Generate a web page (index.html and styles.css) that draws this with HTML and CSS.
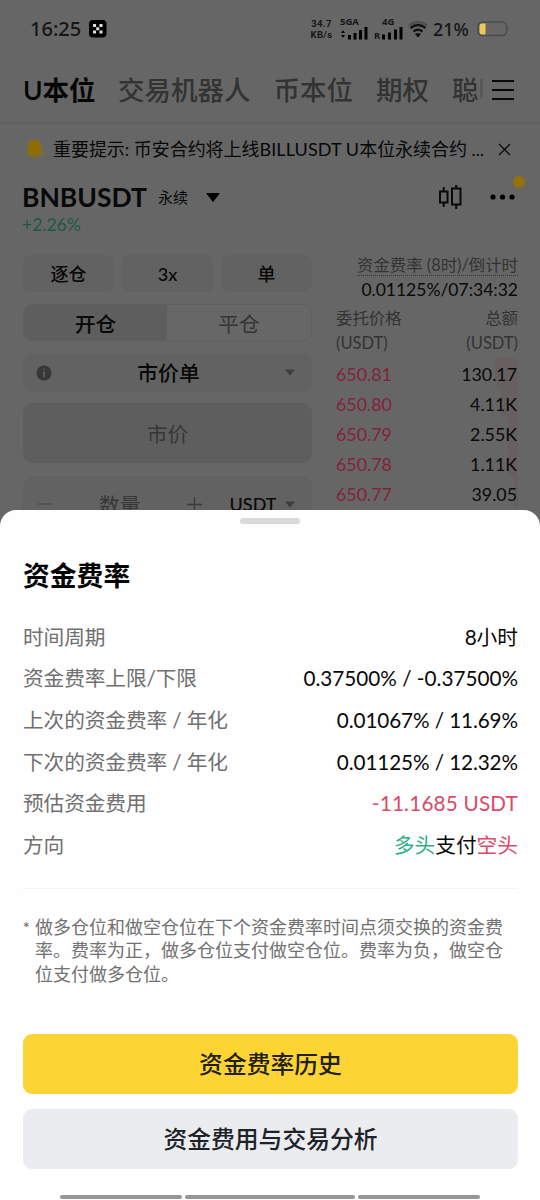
FILE: index.html
```html
<!DOCTYPE html>
<html lang="zh-CN">
<head>
<meta charset="utf-8">
<title>资金费率</title>
<link rel="stylesheet" href="styles.css">
</head>
<body>
<div class="screen">
  <header class="status">
    <span class="clock">16:25</span>
    <svg class="app-badge" width="18" height="18" viewBox="0 0 18 18"><rect width="17.5" height="17.5" rx="4"/><path fill="#ddd" d="M4 4h3v3H4zM10.500 4h3v3h-3zM7.200 7.200h3v3h-3zM4 10.500h3v3H4zM10.500 10.500h3v3h-3z"/></svg>
    <span class="speed"><b>34.7</b><b>KB/s</b></span>
    <span class="signal"><b>5GA</b><svg width="29" height="13" viewBox="0 0 29 13"><path d="M1 6l2-2.800L5 6zM1 8l2 2.800L5 8z"/><path d="M8 8h3v4.500H8zM13.500 6h3v6.500h-3zM19 3h3v9.500h-3zM24.500 0h3v12.500h-3z"/></svg></span>
    <span class="signal signal-r"><b>4G</b><span class="roam"><b>R</b><svg width="21" height="13" viewBox="0 0 21 13"><path d="M0 7.500h3v5H0zM6 5.500h3v7H6zM12 2.500h3v10h-3zM17.500 0h3v12.500h-3z"/></svg></span></span>
    <svg class="wifi" width="20" height="18" viewBox="0 0 20 18" fill="none" stroke-width="2.300"><path stroke="#505050" d="M1 5.500Q10-1.500 19 5.500"/><path stroke="#111" d="M2.500 8Q10 2 17.500 8M5.500 11.500Q10 8 14.500 11.500"/><path fill="#111" d="M7 14q3-2 6 0l-3 3.500z"/></svg>
    <span class="percent">21%</span>
    <svg class="battery" width="33" height="16" viewBox="0 0 33 16"><rect x="1" y="1" width="28.500" height="13.500" rx="4.500" fill="none" stroke="#4b4b4b" stroke-width="1.500"/><path fill="#4b4b4b" d="M30.500 5.500q2 2.200 0 4.500z"/><path fill="#efc65c" d="M5 2.500h3.500v11H5q-2.500 0-2.500-2.500V5q0-2.500 2.500-2.500z"/></svg>
  </header>

  <nav class="tabs">
    <span class="tab tab-on">U本位</span><span class="tab">交易机器人</span><span class="tab">币本位</span><span class="tab">期权</span><span class="tab tab-cut">聪明</span>
    <svg class="menu" width="24" height="22" viewBox="0 0 24 22"><path d="M1 2h22M1 11h22M1 20h22" stroke="#080808" stroke-width="2.200"/></svg>
  </nav>

  <div class="notice">
    <svg class="bell" width="19" height="20" viewBox="0 0 19 20" fill="#8f6d06"><path d="M9.500.5q6.300 0 6.500 6.500v4.500l2.500 3.500v1H.5v-1L3 11.500V7Q3.200.5 9.500.5z"/><path d="M7 17h5q-.5 2.500-2.500 2.500T7 17z"/></svg>
    <p class="notice-text">重要提示: 币安合约将上线<span class="latin">BILLUSDT U</span>本位永续合约 ...</p>
    <svg class="close" width="13" height="13" viewBox="0 0 13 13"><path d="M1 1l11 11M12 1L1 12" stroke="#0b0b0b" stroke-width="1.300"/></svg>
  </div>

  <div class="pair">
    <b class="symbol">BNBUSDT</b><span class="kind">永续</span>
    <svg class="pair-caret" width="14" height="9" viewBox="0 0 14 9"><path d="M.8.500h12.400L7 8.500z" stroke="#050505" stroke-linejoin="round"/></svg>
    <svg class="candles" width="24" height="26" viewBox="0 0 24 26" fill="none" stroke="#090909" stroke-width="2"><path d="M2 7.500h7.500v11H2zM5.700 3v4.500M5.700 18.500V23M14 4.500h8.500v16H14zM18.200 1v3.500M18.200 20.500V25"/></svg>
    <span class="more"><svg width="26" height="6" viewBox="0 0 26 6"><circle cx="3" cy="3" r="2.600"/><circle cx="12.500" cy="3" r="2.600"/><circle cx="22" cy="3" r="2.600"/></svg><i class="dot"></i></span>
  </div>
  <div class="change">+2.26%</div>

  <main class="trade">
    <section class="form">
      <div class="chips"><span>逐仓</span><span>3x</span><span>单</span></div>
      <div class="toggle"><span class="toggle-on">开仓</span><span class="toggle-off">平仓</span></div>
      <div class="select">
        <svg width="16" height="16" viewBox="0 0 16 16"><circle cx="8" cy="8" r="7.500" fill="#373737"/><path d="M8 3.500v1.700M8 6.500v6" stroke="#666" stroke-width="1.400"/></svg>
        <span>市价单</span>
        <svg width="10" height="7" viewBox="0 0 10 7"><path d="M0 .5h10L5 6.500z" fill="#3d3d3d"/></svg>
      </div>
      <div class="price">市价</div>
      <div class="qty">
        <svg width="14" height="14" viewBox="0 0 14 14"><path d="M0 7h14" stroke="#4f4f4f" stroke-width="1.300"/></svg>
        <span class="qty-label">数量</span>
        <svg width="15" height="15" viewBox="0 0 15 15"><path d="M0 7.500h15M7.500 0v15" stroke="#393939" stroke-width="1.300"/></svg>
        <span class="unit">USDT</span>
        <svg width="10" height="7" viewBox="0 0 10 7"><path d="M0 .5h10L5 6.500z" fill="#3d3d3d"/></svg>
      </div>
    </section>
    <section class="book">
      <div class="rate-label"><span>资金费率 (8时)/倒计时</span></div>
      <div class="rate-value">0.01125%/07:34:32</div>
      <div class="book-head"><span>委托价格</span><span>总额</span></div>
      <div class="book-head unit-row"><span>(USDT)</span><span>(USDT)</span></div>
      <div class="ask deep"><span>650.81</span><span>130.17</span></div>
      <div class="ask mid"><span>650.80</span><span>4.11K</span></div>
      <div class="ask"><span>650.79</span><span>2.55K</span></div>
      <div class="ask"><span>650.78</span><span>1.11K</span></div>
      <div class="ask slim"><span>650.77</span><span>39.05</span></div>
    </section>
  </main>

  <section class="sheet">
    <i class="handle"></i>
    <h1 class="title">资金费率</h1>
    <dl class="facts">
      <div><dt>时间周期</dt><dd>8小时</dd></div>
      <div><dt>资金费率上限/下限</dt><dd>0.37500% / -0.37500%</dd></div>
      <div><dt>上次的资金费率 / 年化</dt><dd class="tight">0.01067% / 11.69%</dd></div>
      <div><dt>下次的资金费率 / 年化</dt><dd class="tight">0.01125% / 12.32%</dd></div>
      <div><dt>预估资金费用</dt><dd class="red fee">-11.1685 USDT</dd></div>
      <div><dt>方向</dt><dd><span class="green">多头</span>支付<span class="red">空头</span></dd></div>
    </dl>
    <div class="note"><span class="star">*</span><p>做多仓位和做空仓位在下个资金费率时间点须交换的资金费<br>率。费率为正，做多仓位支付做空仓位。费率为负，做空仓<br>位支付做多仓位。</p></div>
    <div class="btn btn-main">资金费率历史</div>
    <div class="btn btn-sub">资金费用与交易分析</div>
    <div class="navbar"><i></i><i></i><i></i></div>
  </section>
</div>
</body>
</html>
```
FILE: styles.css
```css
* { box-sizing: border-box; }
body { margin: 0; }
p, h1, dl, dd { margin: 0; }
svg { display: block; flex: none; }
.screen {
  position: relative;
  width: 540px;
  height: 1200px;
  overflow: hidden;
  background: #666;
  color: #080808;
  font-family: Lato, "Noto Sans CJK SC", sans-serif;
  white-space: nowrap;
}

/* status bar */
.status { display: flex; align-items: center; height: 57px; padding-left: 30px; color: #161616; }
.clock { width: 59px; font: 500 20px/24px "Noto Sans", sans-serif; }
.speed { display: flex; flex-direction: column; align-items: center; width: 23px; margin-left: 203px; margin-top: 1px; font: 9.500px/11.500px Roboto, sans-serif; letter-spacing: .4px; }
.signal { width: 29px; margin-left: 7px; font: 9.500px/9px "Noto Sans", sans-serif; }
.signal > b { margin-bottom: 1px; }
.signal b { display: block; }
.signal-r { width: 30px; margin-left: 5px; }
.signal-r > b { padding-left: 8px; }
.roam { display: flex; gap: 2px; align-items: flex-end; }
.wifi { margin-left: 4px; }
.percent { width: 43px; margin-left: 5px; font: 500 18px/24px "Noto Sans", sans-serif; }
.battery { margin-left: 1px; }

/* product tabs */
.tabs { display: flex; align-items: center; height: 67px; padding: 1px 0 0 23px; border-bottom: 2px solid #626262; }
.tab { margin-right: 23px; font-size: 26.500px; line-height: 36px; font-weight: 500; color: #333; }
.tab-on { width: 72px; color: #050505; font-weight: 600; }
.tab-cut { width: 32px; margin-right: 7px; overflow: hidden; -webkit-mask-image: linear-gradient(90deg, #000 75%, transparent); mask-image: linear-gradient(90deg, #000 75%, transparent); }

.notice { display: flex; align-items: center; height: 50px; padding-left: 25px; }
.notice-text { width: 445px; margin-left: 9px; font-size: 18px; line-height: 26px; letter-spacing: -.05px; }
.latin { letter-spacing: .1px; }

.pair { display: flex; align-items: center; height: 46px; padding-left: 22px; }
.symbol { width: 136px; font-size: 26.500px; line-height: 30px; font-weight: 700; }
.kind { width: 48px; font-size: 15px; line-height: 20px; }
.candles { margin-left: 218px; }
.more { position: relative; margin-left: 28px; }
.dot { position: absolute; left: 23px; top: -18px; width: 12px; height: 12px; border-radius: 50%; background: #957207; }
.change { height: 34px; padding-left: 22px; font-size: 17.500px; line-height: 10px; color: #1d5844; }

.trade { display: flex; gap: 24px; padding-left: 23px; }
.form { width: 289px; padding-top: 1px; }
.chips { display: grid; grid-template-columns: repeat(3, 1fr); gap: 8px; }
.chips span { height: 37px; border-radius: 8px; background: #626262; text-align: center; font-size: 18px; line-height: 38px; font-weight: 500; }
.toggle { display: flex; height: 37px; margin-top: 12px; border: 1px solid #606060; border-radius: 9px; background: #676767; text-align: center; font-size: 20.800px; line-height: 37px; }
.toggle-on { width: 143px; border-radius: 8px 0 0 8px; background: #5e5e5e; font-weight: 500; }
.toggle-off { flex: 1; color: #353535; }
.select { display: flex; align-items: center; justify-content: space-between; height: 39px; margin-top: 12px; padding: 0 17px 0 13px; border-radius: 9px; background: #626262; font-size: 20.800px; line-height: 37px; font-weight: 500; }
.price { height: 60px; margin-top: 11px; border-radius: 10px; background: #5e5e5e; color: #373737; text-align: center; font-size: 20.800px; line-height: 62px; }
.qty { display: flex; align-items: center; height: 60px; margin-top: 13px; padding: 0 17px 4px 15px; border-radius: 10px; background: #626262; }
.qty-label { margin: 0 46px 0 47px; font-size: 20.800px; color: #373737; }
.unit { width: 46px; margin: 0 9px 0 28px; font-size: 18px; font-weight: 500; }

.book { width: 182px; color: #090909; }
.rate-label { height: 22px; text-align: right; color: #333; font-size: 16.400px; line-height: 22px; }
.rate-label span { display: inline-block; height: 22px; border-bottom: 1px dotted #333; }
.rate-value { text-align: right; font-size: 17.500px; line-height: 28px; }
.book-head { display: flex; justify-content: space-between; height: 28px; font-size: 16.400px; line-height: 28px; color: #333; }
.unit-row { height: 25px; line-height: 22px; font-size: 16.500px; }
.ask { display: flex; justify-content: space-between; height: 30px; padding-right: 1px; font-size: 17.800px; line-height: 34px; background: linear-gradient(#675f60, #675f60) right / 10px 100% no-repeat; }
.ask span:first-child { color: #822439; }
.deep { background-size: 23px 100%; }
.mid { background-size: 17px 100%; }
.slim { background-size: 4px 100%; }

/* bottom sheet */
.sheet { position: absolute; left: 0; right: 0; bottom: 0; height: 690px; padding: 8px 22px 0 23px; border-radius: 16px 16px 0 0; background: #fefefe; }
.handle { display: block; width: 60px; height: 6px; margin-left: 217px; border-radius: 3px; background: #d9dadc; }
.title { margin-top: 32px; font-size: 26.800px; line-height: 40px; font-weight: 700; color: #050505; }
.facts { padding: 19.500px 0 22.500px; border-bottom: 1px solid #f3f3f3; }
.facts div { display: flex; justify-content: space-between; height: 41.700px; font-size: 20.700px; line-height: 42px; }
.facts dt { color: #707070; letter-spacing: -.1px; }
.facts dd { color: #090909; }
.facts .tight { letter-spacing: -.1px; }
.facts .fee { letter-spacing: .2px; }
.facts .red { color: #d94a67; }
.facts .green { color: #2fae83; }
.note { display: flex; margin-top: 27px; color: #717171; font-size: 18px; line-height: 23.300px; }
.star { width: 12px; font: 13px/23px Inter, sans-serif; }
.btn { height: 60px; border-radius: 9px; text-align: center; font-size: 23.800px; line-height: 61px; font-weight: 500; }
.btn-main { margin-top: 48px; background: #fcd535; color: #222015; }
.btn-sub { margin-top: 15px; background: #eaecef; color: #1e2329; }
.navbar { display: grid; grid-template-columns: 122px 170px 122px; gap: 3px; margin: 26px 0 0 37px; }
.navbar i { height: 4px; border-radius: 2px; background: #969696; }
```
